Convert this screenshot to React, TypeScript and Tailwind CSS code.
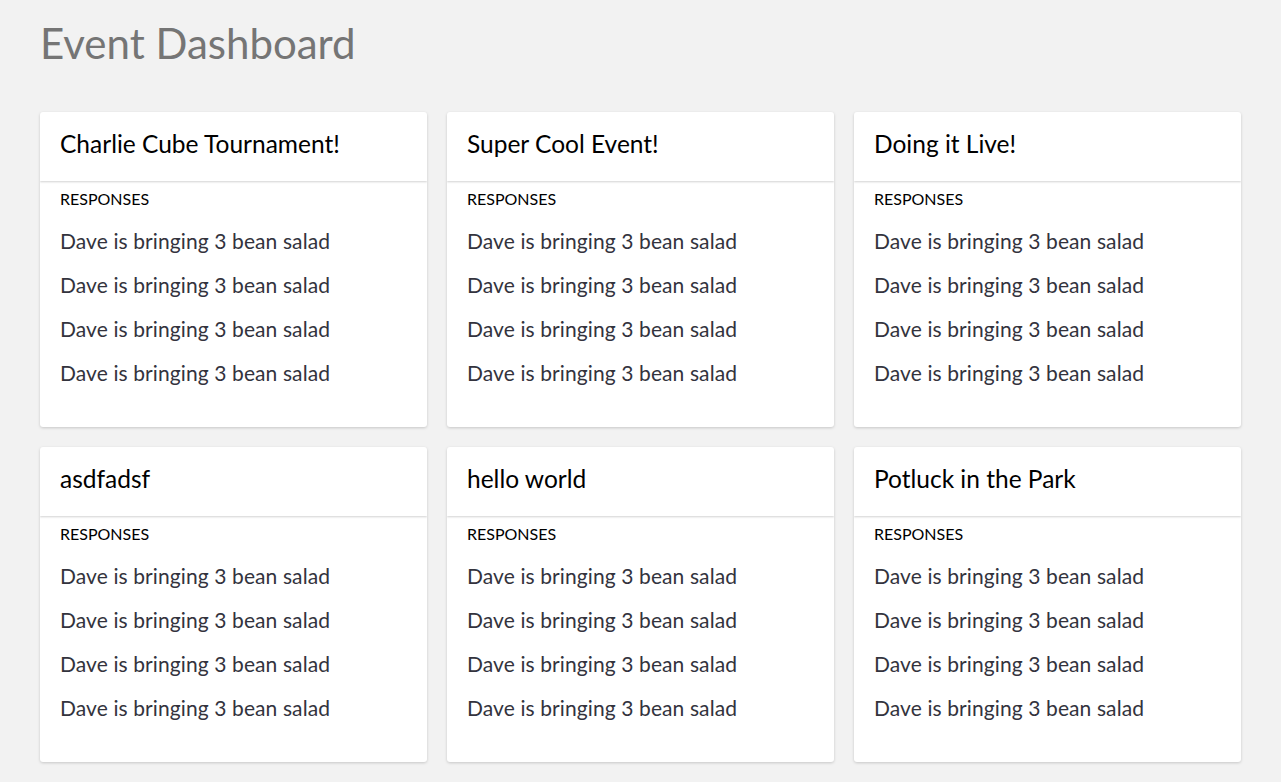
const events = [
  'Charlie Cube Tournament!',
  'Super Cool Event!',
  'Doing it Live!',
  'asdfadsf',
  'hello world',
  'Potluck in the Park',
]

const responses = [
  'Dave is bringing 3 bean salad',
  'Dave is bringing 3 bean salad',
  'Dave is bringing 3 bean salad',
  'Dave is bringing 3 bean salad',
]

function EventCard({ title }: { title: string }) {
  return (
    <div className="bg-white rounded-[3px] shadow-[0_1px_3px_rgba(0,0,0,0.18)] overflow-hidden">
      <div className="h-[69px] flex items-center px-5 pb-[5px] shadow-[0_1px_2px_rgba(0,0,0,0.18)] relative">
        <h2 className="text-[24.5px] text-black">{title}</h2>
      </div>
      <div className="px-5 pt-2 pb-8">
        <div className="text-[16px] leading-5 h-5 text-black uppercase">Responses</div>
        <ul className="mt-[10px]">
          {responses.map((r, i) => (
            <li key={i} className="h-11 flex items-center pb-[1px] text-[21px] tracking-[0.1px] text-[#33333d]">
              {r}
            </li>
          ))}
        </ul>
      </div>
    </div>
  )
}

export default function App() {
  return (
    <div className="min-h-screen bg-[#f2f2f2] px-10 pt-[16px] pb-5 font-['Lato',sans-serif]">
      <h1 className="text-[42px] leading-[54px] text-[#757575]">Event Dashboard</h1>
      <div className="grid grid-cols-3 gap-5 mt-[42px]">
        {events.map((e) => (
          <EventCard key={e} title={e} />
        ))}
      </div>
    </div>
  )
}
